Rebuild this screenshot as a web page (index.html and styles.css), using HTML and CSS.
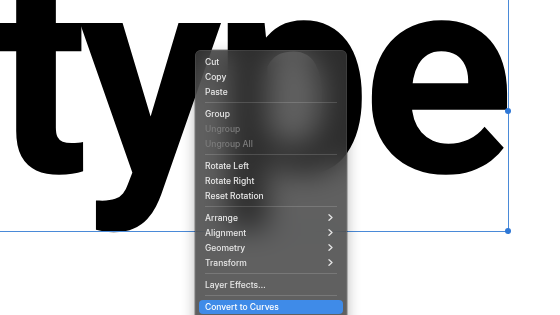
FILE: index.html
```html
<!DOCTYPE html>
<html>
<head>
<meta charset="utf-8">
<link rel="stylesheet" href="styles.css">
</head>
<body>
<div class="canvas">
  <div class="word">type</div>
  <div class="selection"></div>
  <div class="handle handle-mid"></div>
  <div class="handle handle-corner"></div>
  <div class="menu">
    <div class="item">Cut</div>
    <div class="item">Copy</div>
    <div class="item">Paste</div>
    <div class="sep"></div>
    <div class="item">Group</div>
    <div class="item disabled">Ungroup</div>
    <div class="item disabled">Ungroup All</div>
    <div class="sep"></div>
    <div class="item">Rotate Left</div>
    <div class="item">Rotate Right</div>
    <div class="item">Reset Rotation</div>
    <div class="sep"></div>
    <div class="item">Arrange<svg class="chev" viewBox="0 0 5 7"><polyline points="1,0.8 4,3.5 1,6.2"/></svg></div>
    <div class="item">Alignment<svg class="chev" viewBox="0 0 5 7"><polyline points="1,0.8 4,3.5 1,6.2"/></svg></div>
    <div class="item">Geometry<svg class="chev" viewBox="0 0 5 7"><polyline points="1,0.8 4,3.5 1,6.2"/></svg></div>
    <div class="item">Transform<svg class="chev" viewBox="0 0 5 7"><polyline points="1,0.8 4,3.5 1,6.2"/></svg></div>
    <div class="sep"></div>
    <div class="item">Layer Effects…</div>
    <div class="sep"></div>
    <div class="item active">Convert to Curves</div>
  </div>
</div>
</body>
</html>
```
FILE: styles.css
```css
html, body {
  margin: 0;
  padding: 0;
  background: #ffffff;
}
.canvas {
  position: relative;
  width: 560px;
  height: 315px;
  overflow: hidden;
  background: #ffffff;
}
.word {
  position: absolute;
  left: -7px;
  top: -65px;
  font-family: Roboto, "Noto Sans", sans-serif;
  font-weight: 700;
  font-size: 282px;
  line-height: 1;
  letter-spacing: -9px;
  color: #000;
  white-space: nowrap;
}
.selection {
  position: absolute;
  left: -10px;
  top: -10px;
  width: 517px;
  height: 240px;
  border: 1px solid #4a8ad8;
}
.handle {
  position: absolute;
  width: 6px;
  height: 6px;
  border-radius: 50%;
  background: #2f78d6;
}
.handle-mid { left: 505px; top: 108px; }
.handle-corner { left: 505px; top: 228px; }
.menu {
  position: absolute;
  left: 195px;
  top: 50px;
  width: 152px;
  height: 290px;
  box-sizing: border-box;
  padding: 4px 4px;
  border-radius: 6px;
  display: flex;
  flex-direction: column;
  background: rgba(56, 56, 56, 0.8);
  -webkit-backdrop-filter: blur(14px);
  backdrop-filter: blur(14px);
  box-shadow: 0 0 0 0.5px rgba(0,0,0,0.45), inset 0 0 0 0.5px rgba(255,255,255,0.16), 0 5px 14px rgba(0,0,0,0.3);
  font-family: Inter, "Noto Sans", sans-serif;
  font-size: 8.5px;
  font-weight: 500;
  color: #e8e8e8;
}
.item {
  height: 15px;
  flex: 0 0 15px;
  display: flex;
  align-items: center;
  justify-content: space-between;
  padding: 0 10px 0 6px;
  border-radius: 4px;
  white-space: nowrap;
}
.item.disabled {
  color: #7c7c7c;
}
.item.active {
  background: #3f8be8;
  color: #ffffff;
  height: 14px;
  flex: 0 0 14px;
  margin-top: 0.5px;
}
.sep {
  flex: 0 0 7px;
  height: 7px;
  display: flex;
  align-items: center;
  padding: 0 6px;
}
.sep::before {
  content: "";
  display: block;
  width: 100%;
  height: 1px;
  background: rgba(255,255,255,0.15);
}
.chev {
  width: 5px;
  height: 7px;
  fill: none;
  stroke: #e6e6e6;
  stroke-width: 1.3;
  stroke-linecap: round;
  stroke-linejoin: round;
}
```
